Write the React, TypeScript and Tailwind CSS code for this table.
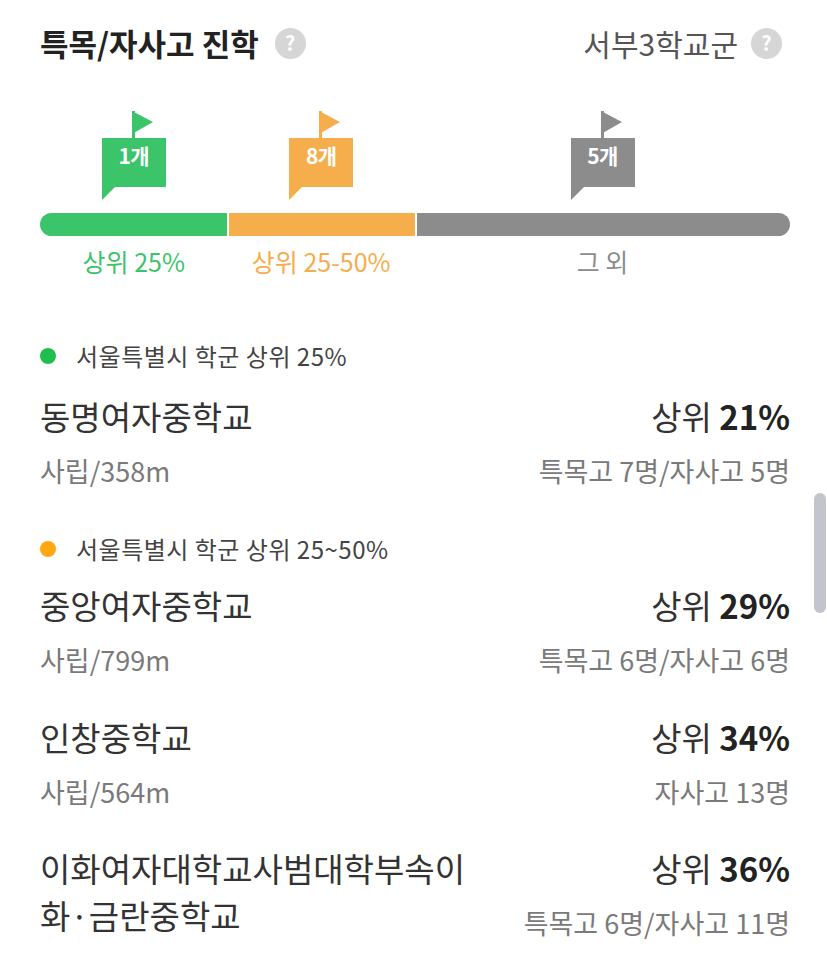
import React from "react";

const FONT = { fontFamily: '"Noto Sans CJK KR", "Noto Sans", sans-serif' };

function Help() {
  return (
    <span className="inline-flex h-[31px] w-[31px] items-center justify-center rounded-full bg-[#d6d6d6] text-[20px] font-bold leading-none text-white">
      ?
    </span>
  );
}

function Flag({ color, label }: { color: string; label: string }) {
  return (
    <div className="relative h-[89px] w-[64px]">
      <svg width="64" height="89" viewBox="0 0 64 89" className="absolute left-0 top-0">
        <rect x="30" y="0" width="3" height="28" fill={color} />
        <polygon points="30,0 51,11 30,23" fill={color} />
        <rect x="0" y="27" width="64" height="49" fill={color} />
        <polygon points="0,75 14,75 0,89" fill={color} />
      </svg>
      <div className="absolute left-0 right-0 top-[31px] text-center text-[21px] font-bold leading-[26px] tracking-[-0.5px] text-white">
        {label}
      </div>
    </div>
  );
}

function Legend({ color, text, className }: { color: string; text: string; className: string }) {
  return (
    <div className={"flex items-center gap-[20px] " + className}>
      <span className={"h-[16px] w-[16px] rounded-full " + color} />
      <span className="text-[24px] leading-[30px] tracking-[0.5px] text-[#444]">{text}</span>
    </div>
  );
}

function School({
  name,
  sub,
  pct,
  counts,
  className,
}: {
  name: string;
  sub?: string;
  pct: string;
  counts: string;
  className: string;
}) {
  return (
    <div className={"flex justify-between gap-[20px] " + className}>
      <div className="min-w-0 max-w-[445px] flex-1">
        <div className="text-[33px] leading-[47px] text-[#333]">{name}</div>
        {sub ? <div className="mt-[14px] text-[27px] leading-[34px] text-[#7a7a7a]">{sub}</div> : null}
      </div>
      <div className="shrink-0 text-right">
        <div className="whitespace-nowrap text-[33px] leading-[47px] text-[#333]">
          상위 <span className="font-bold text-[#222]">{pct}</span>
        </div>
        <div className="mt-[14px] whitespace-nowrap text-[27px] leading-[34px] text-[#7a7a7a]">{counts}</div>
      </div>
    </div>
  );
}

export default function App() {
  return (
    <div className="relative h-[960px] w-[827px] overflow-hidden bg-white" style={FONT}>
      <div className="pl-[40px] pr-[37px] pt-[23px]">
        <div className="flex items-center justify-between">
          <div className="flex items-center gap-[16px]">
            <span className="text-[31px] font-bold leading-[40px] text-[#222]">특목/자사고 진학</span>
            <Help />
          </div>
          <div className="flex items-center gap-[13px] pr-[8px]">
            <span className="text-[30px] leading-[40px] text-[#555]">서부3학교군</span>
            <Help />
          </div>
        </div>

        <div className="mt-[48px] flex">
          <div className="flex flex-1 justify-center">
            <Flag color="#3cc46a" label="1개" />
          </div>
          <div className="flex flex-1 justify-center">
            <Flag color="#f6ad4c" label="8개" />
          </div>
          <div className="flex flex-[2] justify-center">
            <Flag color="#8c8c8c" label="5개" />
          </div>
        </div>

        <div className="mt-[13px] flex h-[23px] gap-[2px] overflow-hidden rounded-full">
          <div className="flex-1 bg-[#3cc46a]" />
          <div className="flex-1 bg-[#f6ad4c]" />
          <div className="flex-[2] bg-[#8c8c8c]" />
        </div>

        <div className="mt-[10px] flex text-[25px] leading-[30px]">
          <div className="flex-1 text-center text-[#3cc46a]">상위 25%</div>
          <div className="flex-1 text-center text-[#f6ad4c]">상위 25-50%</div>
          <div className="flex-[2] text-center text-[#8c8c8c]">그 외</div>
        </div>

        <Legend color="bg-[#1fbf4f]" text="서울특별시 학군 상위 25%" className="mt-[65px]" />
        <School
          className="mt-[22px]"
          name="동명여자중학교"
          sub="사립/358m"
          pct="21%"
          counts="특목고 7명/자사고 5명"
        />

        <Legend color="bg-[#ffa812]" text="서울특별시 학군 상위 25~50%" className="mt-[46px]" />
        <School
          className="mt-[18px]"
          name="중앙여자중학교"
          sub="사립/799m"
          pct="29%"
          counts="특목고 6명/자사고 6명"
        />
        <School
          className="mt-[37px]"
          name="인창중학교"
          sub="사립/564m"
          pct="34%"
          counts="자사고 13명"
        />
        <School
          className="mt-[36px]"
          name="이화여자대학교사범대학부속이화·금란중학교"
          pct="36%"
          counts="특목고 6명/자사고 11명"
        />
      </div>

      <div className="absolute right-[1px] top-[493px] h-[120px] w-[12px] rounded-full bg-[#c3c5cc]" />
    </div>
  );
}
